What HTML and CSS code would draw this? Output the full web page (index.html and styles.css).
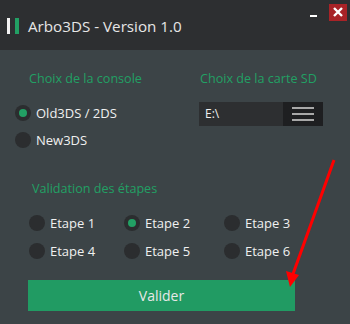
FILE: index.html
```html
<!DOCTYPE html>
<html lang="fr">

<head>
  <meta charset="UTF-8">
  <meta name="viewport" content="width=device-width, initial-scale=1.0">
  <link rel="stylesheet" href="styles.css">
  <title>Arbo3DS</title>
</head>

<body>

  <div class="window">
    <div class="titlebar">
      <span class="bar bar-white"></span>
      <span class="bar bar-green"></span>
      <span class="title">Arbo3DS - Version 1.0</span>
      <div class="controls">
        <span class="minimize"></span>
        <span class="close">
          <svg width="18" height="17" viewBox="0 0 18 17">
            <path d="M5 4 L13 12 M13 4 L5 12" stroke="#fff" stroke-width="2.4" />
          </svg>
        </span>
      </div>
    </div>

    <div class="content">
      <div class="top">
        <div class="group">
          <div class="heading">Choix de la console</div>
          <div class="radios">
            <label class="radio checked"><span class="dot"></span>Old3DS / 2DS</label>
            <label class="radio"><span class="dot"></span>New3DS</label>
          </div>
        </div>
        <div class="group">
          <div class="heading heading-sd">Choix de la carte SD</div>
          <div class="picker">
            <span class="path">E:\</span>
            <span class="menu">
              <i></i><i></i><i></i>
            </span>
          </div>
        </div>
      </div>

      <div class="steps">
        <div class="heading heading-steps">Validation des étapes</div>
        <div class="step-grid">
          <label class="radio"><span class="dot"></span>Etape 1</label>
          <label class="radio checked"><span class="dot"></span>Etape 2</label>
          <label class="radio"><span class="dot"></span>Etape 3</label>
          <label class="radio"><span class="dot"></span>Etape 4</label>
          <label class="radio"><span class="dot"></span>Etape 5</label>
          <label class="radio"><span class="dot"></span>Etape 6</label>
        </div>
      </div>

      <button class="validate">Valider</button>
    </div>

    <!-- annotation arrow -->
    <svg class="arrow" width="350" height="324" viewBox="0 0 350 324">
      <line x1="334" y1="160" x2="293" y2="274" stroke="#ff0000" stroke-width="3" />
      <polygon points="290,287 286,271 299,275" fill="#ff0000" />
    </svg>
  </div>

</body>

</html>
```

FILE: styles.css
```css
body {
  margin: 0;
  font-family: "Open Sans", "Noto Sans", sans-serif;
  background-color: #3c4447;
}

.window {
  position: relative;
  width: 350px;
  height: 324px;
  background-color: #3c4447;
  overflow: hidden;
}

.titlebar {
  display: flex;
  align-items: center;
  height: 50px;
  background-color: #2d2f31;
}

.bar {
  height: 16px;
  margin-top: 1px;
}

.bar-white {
  width: 3px;
  margin-left: 7px;
  background-color: #f2f2f2;
}

.bar-green {
  width: 4px;
  margin-left: 5px;
  background-color: #22a064;
}

.title {
  margin-left: 9px;
  margin-top: 1px;
  font-size: 15.2px;
  color: #e6e6e6;
}

.controls {
  display: flex;
  align-self: flex-start;
  margin-left: auto;
  margin-right: 3px;
  margin-top: 4px;
}

.minimize {
  width: 7px;
  height: 2px;
  margin-top: 11px;
  margin-right: 12px;
  background-color: #ffffff;
}

.close {
  display: block;
  width: 18px;
  height: 17px;
  background-color: #a82327;
}

.close svg {
  display: block;
}

.content {
  padding-left: 15px;
}

.top {
  display: grid;
  grid-template-columns: 184px auto;
}

.heading {
  margin-top: 21px;
  font-size: 12.6px;
  line-height: 16px;
  color: #22a064;
}

.group > .heading {
  margin-left: 14px;
}

.group > .heading-sd {
  margin-left: 1px;
}

.radios {
  display: flex;
  flex-direction: column;
  gap: 11px;
  margin-top: 18px;
}

.radio {
  display: flex;
  align-items: center;
  gap: 5px;
  height: 16px;
  font-size: 13px;
  color: #f0f0f0;
}

.dot {
  position: relative;
  width: 16px;
  height: 16px;
  border-radius: 50%;
  background-color: #2b2d2f;
}

.checked .dot::after {
  content: "";
  position: absolute;
  left: 4px;
  top: 4px;
  width: 8px;
  height: 8px;
  border-radius: 50%;
  background-color: #22a064;
}

.picker {
  display: flex;
  width: 124px;
  height: 24px;
  margin-top: 15px;
  background-color: #2d2f31;
}

.path {
  flex: 1;
  padding-left: 6px;
  font-size: 12px;
  line-height: 24px;
  color: #f0f0f0;
}

.menu {
  display: flex;
  flex-direction: column;
  align-items: center;
  justify-content: center;
  gap: 4px;
  width: 40px;
  background-color: #1e1f21;
}

.menu i {
  display: block;
  width: 22px;
  height: 2px;
  background-color: #a8a8a8;
}

.steps {
  margin-left: 14px;
}

.heading-steps {
  margin-top: 33px;
  margin-left: 3px;
}

.step-grid {
  display: grid;
  grid-template-columns: 95px 100px auto;
  row-gap: 12px;
  margin-top: 18px;
}

.validate {
  display: block;
  width: 267px;
  height: 31px;
  margin-top: 21px;
  margin-left: 13px;
  border: none;
  padding: 0;
  font-family: "Open Sans", "Noto Sans", sans-serif;
  font-size: 14px;
  color: #e8e8e8;
  background-color: #219b63;
}

.arrow {
  position: absolute;
  left: 0;
  top: 0;
  pointer-events: none;
}
```
